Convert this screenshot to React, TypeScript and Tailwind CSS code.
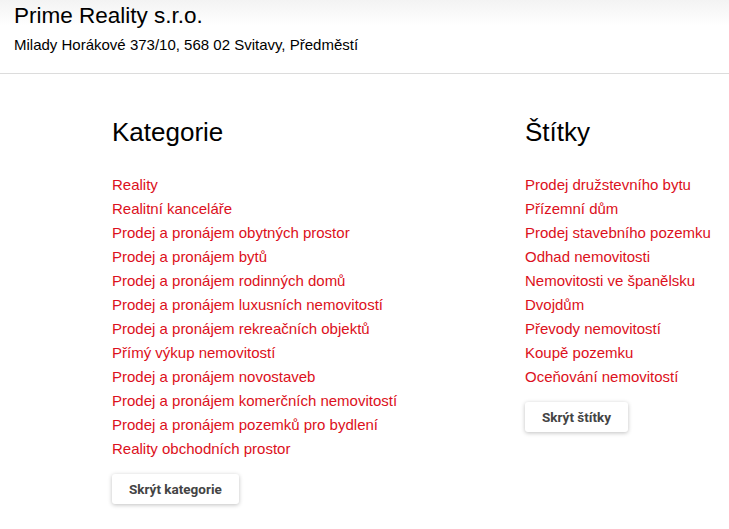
const kategorie = [
  'Reality',
  'Realitní kanceláře',
  'Prodej a pronájem obytných prostor',
  'Prodej a pronájem bytů',
  'Prodej a pronájem rodinných domů',
  'Prodej a pronájem luxusních nemovitostí',
  'Prodej a pronájem rekreačních objektů',
  'Přímý výkup nemovitostí',
  'Prodej a pronájem novostaveb',
  'Prodej a pronájem komerčních nemovitostí',
  'Prodej a pronájem pozemků pro bydlení',
  'Reality obchodních prostor',
];

const stitky = [
  'Prodej družstevního bytu',
  'Přízemní dům',
  'Prodej stavebního pozemku',
  'Odhad nemovitosti',
  'Nemovitosti ve španělsku',
  'Dvojdům',
  'Převody nemovitostí',
  'Koupě pozemku',
  'Oceňování nemovitostí',
];

function Sloupec({ nadpis, polozky, tlacitko }: { nadpis: string; polozky: string[]; tlacitko: string }) {
  return (
    <div>
      <h2 className="text-[26px] leading-[30px] text-black">{nadpis}</h2>
      <ul className="mt-[26px]">
        {polozky.map((p) => (
          <li key={p} className="text-[15px] leading-[24px] text-[#dc1020] whitespace-nowrap">
            <a href="#">{p}</a>
          </li>
        ))}
      </ul>
      <button className="mt-[13px] h-[30px] px-[17px] rounded-[3px] bg-white text-[13.5px] font-bold text-[#444] shadow-[0_1px_4px_rgba(0,0,0,0.25)] font-['Roboto',sans-serif]">
        {tlacitko}
      </button>
    </div>
  );
}

export default function App() {
  return (
    <div className="min-h-screen bg-white font-['Liberation_Sans',Arial,sans-serif] overflow-hidden">
      {/* HEADER */}
      <header className="bg-gradient-to-b from-[#f3f3f3] to-white to-[35%] border-b border-[#dcdcdc] px-[14px] pt-[3px] pb-[18px]">
        <h1 className="text-[22.5px] leading-[26px] text-black">Prime Reality s.r.o.</h1>
        <p className="mt-[6px] text-[15px] leading-[20px] text-black">
          Milady Horákové 373/10, 568 02 Svitavy, Předměstí
        </p>
      </header>

      {/* CONTENT */}
      <main className="flex pl-[112px] pt-[43px]">
        <div className="w-[413px] shrink-0">
          <Sloupec nadpis="Kategorie" polozky={kategorie} tlacitko="Skrýt kategorie" />
        </div>
        <div className="shrink-0">
          <Sloupec nadpis="Štítky" polozky={stitky} tlacitko="Skrýt štítky" />
        </div>
      </main>
    </div>
  );
}
